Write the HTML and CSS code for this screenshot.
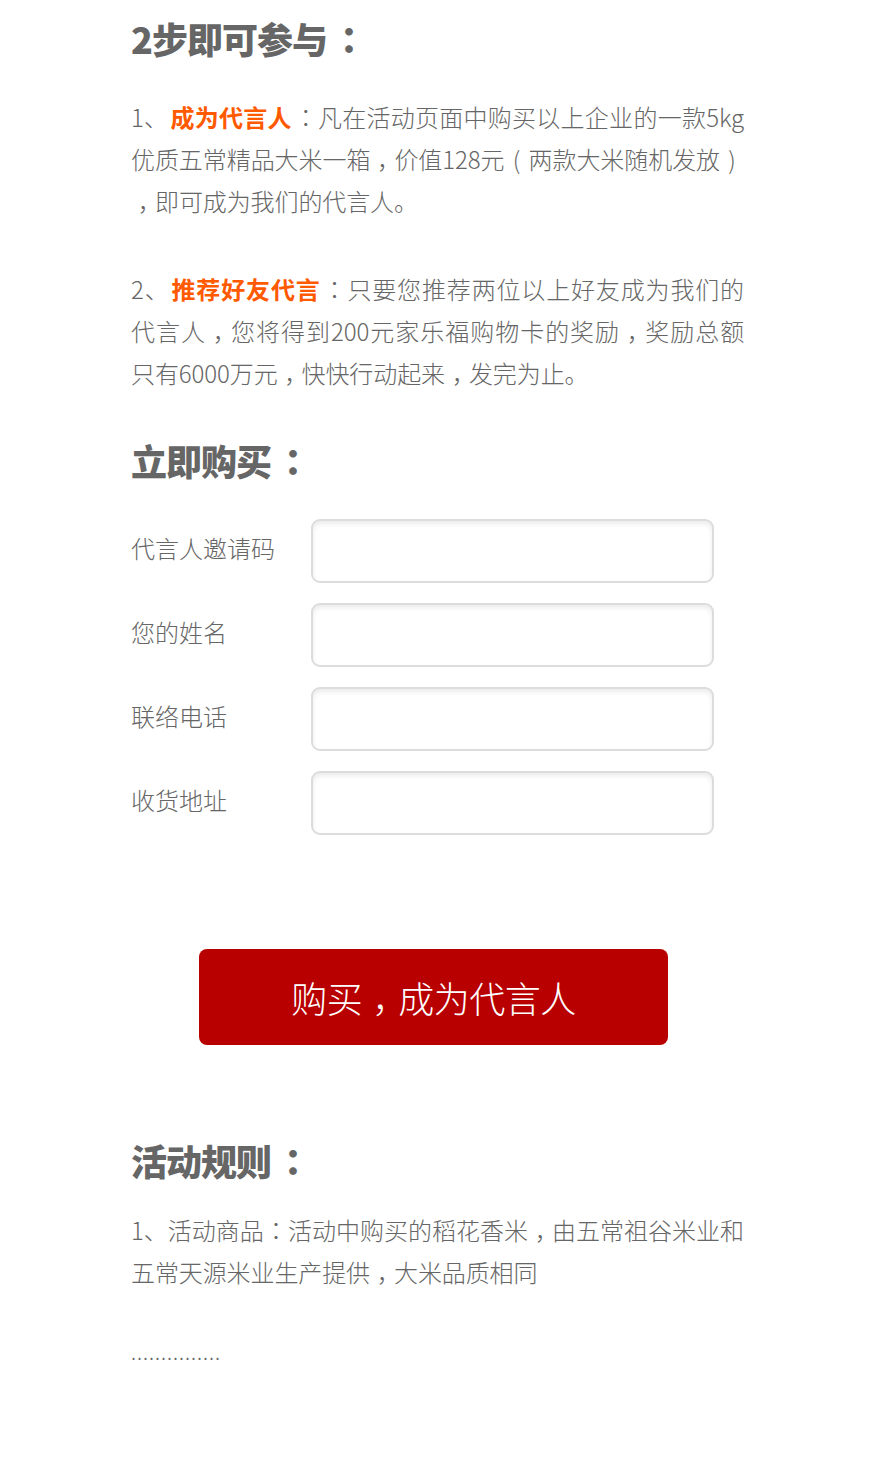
FILE: index.html
```html
<!DOCTYPE html>
<html lang="zh-CN">
<head>
<meta charset="utf-8">
<title>2步即可参与</title>
<link rel="stylesheet" href="styles.css">
</head>
<body>
<div class="page">
  <h2 class="title t1">2步即可参与<span class="pc" lang="zh-TW">：</span></h2>
  <p class="para p1"><span class="jl">1、<b class="hl">成为代言人</b><span class="pc" lang="zh-TW">：</span>凡在活动页面中购买以上企业的一款5kg</span><span class="jl">优质五常精品大米一箱<span class="cm">，</span>价值128元<span class="pr">(</span>两款大米随机发放<span class="pr">)</span></span><span class="ll"><span class="cm">，</span>即可成为我们的代言人。</span></p>
  <p class="para p2"><span class="jl">2、<b class="hl">推荐好友代言</b><span class="pc" lang="zh-TW">：</span>只要您推荐两位以上好友成为我们的</span><span class="jl">代言人<span class="cm">，</span>您将得到200元家乐福购物卡的奖励<span class="cm">，</span>奖励总额</span><span class="ll">只有6000万元<span class="cm">，</span>快快行动起来<span class="cm">，</span>发完为止。</span></p>

  <h2 class="title t2">立即购买<span class="pc" lang="zh-TW">：</span></h2>
  <form class="form">
    <div class="row"><label class="label">代言人邀请码</label><input class="input" type="text"></div>
    <div class="row"><label class="label">您的姓名</label><input class="input" type="text"></div>
    <div class="row"><label class="label">联络电话</label><input class="input" type="text"></div>
    <div class="row"><label class="label">收货地址</label><input class="input" type="text"></div>
  </form>
  <button class="buy" type="button">购买<span class="cm">，</span>成为代言人</button>

  <h2 class="title t3">活动规则<span class="pc" lang="zh-TW">：</span></h2>
  <p class="para p3"><span class="jl">1、活动商品<span class="pc" lang="zh-TW">：</span>活动中购买的稻花香米<span class="cm">，</span>由五常祖谷米业和</span><span class="ll">五常天源米业生产提供<span class="cm">，</span>大米品质相同</span></p>
  <p class="dots">...............</p>
</div>
</body>
</html>
```
FILE: styles.css
```css
html, body {
  margin: 0;
  padding: 0;
  background: #fff;
}
.page {
  margin-left: 131px;
  width: 620px;
  padding-bottom: 80px;
  font-family: "Noto Sans CJK SC", "Noto Sans", sans-serif;
  color: #666;
}
.pc {
  font-family: "Noto Sans CJK TC", "Noto Sans CJK SC", sans-serif;
}
.cm {
  padding-left: 0.28em;
  letter-spacing: -0.28em;
}
.pr {
  display: inline-block;
  width: 1em;
  text-align: center;
  text-align-last: center;
}
.title {
  margin: 0;
  font-size: 36px;
  line-height: 48px;
  font-weight: 900;
  color: #666;
  letter-spacing: -1px;
}
.title .pc {
  margin-left: 4px;
}
.t1 { margin-top: 14px; }
.t2 { margin-top: 42px; }
.t3 { margin-top: 91px; }
.para {
  margin: 0;
  width: 613px;
  font-size: 24px;
  line-height: 42px;
  font-weight: 300;
  letter-spacing: -0.1px;
}
.jl {
  display: block;
  text-align: justify;
  text-align-last: justify;
}
.ll {
  display: block;
  white-space: nowrap;
}
.p1 { margin-top: 34px; }
.p2 { margin-top: 46px; }
.p3 { margin-top: 25px; }
.hl {
  color: #ff5a00;
  font-weight: 700;
  margin: 0 2px;
}
.form {
  margin-top: 35px;
  display: flex;
  flex-direction: column;
  gap: 20px;
}
.row {
  display: flex;
  align-items: center;
}
.label {
  width: 180px;
  padding-bottom: 8px;
  font-size: 24px;
  font-weight: 300;
  color: #666;
}
.input {
  box-sizing: border-box;
  width: 403px;
  height: 64px;
  margin: 0;
  border: 2px solid #dcdcdc;
  border-radius: 9px;
  background: #fff;
  box-shadow: inset 0 3px 5px rgba(0,0,0,0.08);
  outline: none;
}
.buy {
  display: block;
  margin: 114px 0 0 68px;
  width: 469px;
  height: 96px;
  border: none;
  border-radius: 8px;
  background: #b90000;
  color: #fff;
  font-family: "Noto Sans CJK SC", "Noto Sans", sans-serif;
  font-size: 36px;
  font-weight: 300;
  letter-spacing: -0.5px;
  padding: 0;
}
.dots {
  margin: 38px 0 0;
  font-size: 20px;
  line-height: 42px;
  font-weight: 300;
  letter-spacing: 1px;
}
```
